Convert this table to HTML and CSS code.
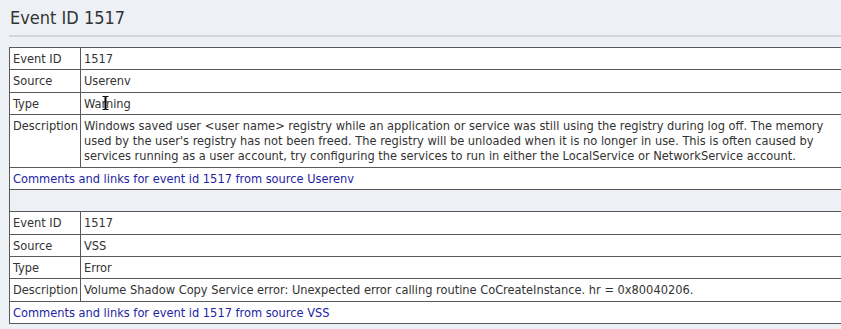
FILE: index.html
```html
<!DOCTYPE html>
<html lang="en">
<head>
    <meta charset="UTF-8">
    <title>Event ID 1517</title>
    <link rel="stylesheet" href="styles.css">
</head>
<body>
    <div class="page">
        <h1>Event ID 1517</h1>
        <table class="events">
            <tr>
                <td class="label">Event ID</td>
                <td>1517</td>
            </tr>
            <tr>
                <td class="label">Source</td>
                <td>Userenv</td>
            </tr>
            <tr>
                <td class="label">Type</td>
                <td class="cursor-cell">Warning<span class="ibeam"><svg width="7" height="14" viewBox="0 0 7 14"><path d="M0.5 0.5h2.5v13h-2.5M6.5 0.5h-2.5v13h2.5M3.5 0.5v13" fill="none" stroke="#000" stroke-width="1"/></svg></span></td>
            </tr>
            <tr>
                <td class="label">Description</td>
                <td>Windows saved user &lt;user name&gt; registry while an application or service was still using the registry during log off. The memory used by the user's registry has not been freed. The registry will be unloaded when it is no longer in use. This is often caused by services running as a user account, try configuring the services to run in either the LocalService or NetworkService account.</td>
            </tr>
            <tr>
                <td colspan="2"><a href="#">Comments and links for event id 1517 from source Userenv</a></td>
            </tr>
            <tr class="spacer">
                <td colspan="2"></td>
            </tr>
            <tr>
                <td class="label">Event ID</td>
                <td>1517</td>
            </tr>
            <tr>
                <td class="label">Source</td>
                <td>VSS</td>
            </tr>
            <tr>
                <td class="label">Type</td>
                <td>Error</td>
            </tr>
            <tr>
                <td class="label">Description</td>
                <td>Volume Shadow Copy Service error: Unexpected error calling routine CoCreateInstance. hr = 0x80040206.</td>
            </tr>
            <tr>
                <td colspan="2"><a href="#">Comments and links for event id 1517 from source VSS</a></td>
            </tr>
        </table>
    </div>
</body>
</html>
```

FILE: styles.css
```css
body {
    margin: 0;
    background-color: #edf1f5;
    font-family: "DejaVu Sans Condensed", "DejaVu Sans", sans-serif;
    font-size: 12.7px;
    color: #333;
    overflow: hidden;
}
.page {
    padding-left: 9px;
    width: 843px;
}
h1 {
    margin: 0 0 10px 0;
    padding: 8px 0 8px 1px;
    font-size: 18px;
    font-weight: normal;
    line-height: 19px;
    color: #333;
    border-bottom: 2px solid #d4d6d9;
}
.events {
    width: 100%;
    border-collapse: collapse;
    background: white;
}
.events td {
    border: 1px solid #5a5a5a;
    padding: 3px 3px;
    line-height: 15.3px;
    vertical-align: top;
}
.events td.label {
    width: 62px;
    padding-right: 2px;
    white-space: nowrap;
}
.events a {
    color: #2424a4;
    text-decoration: none;
}
.spacer td {
    background-color: #edf1f5;
    height: 15.3px;
}
.cursor-cell {
    position: relative;
}
.ibeam {
    position: absolute;
    left: 21px;
    top: 3px;
}
```
